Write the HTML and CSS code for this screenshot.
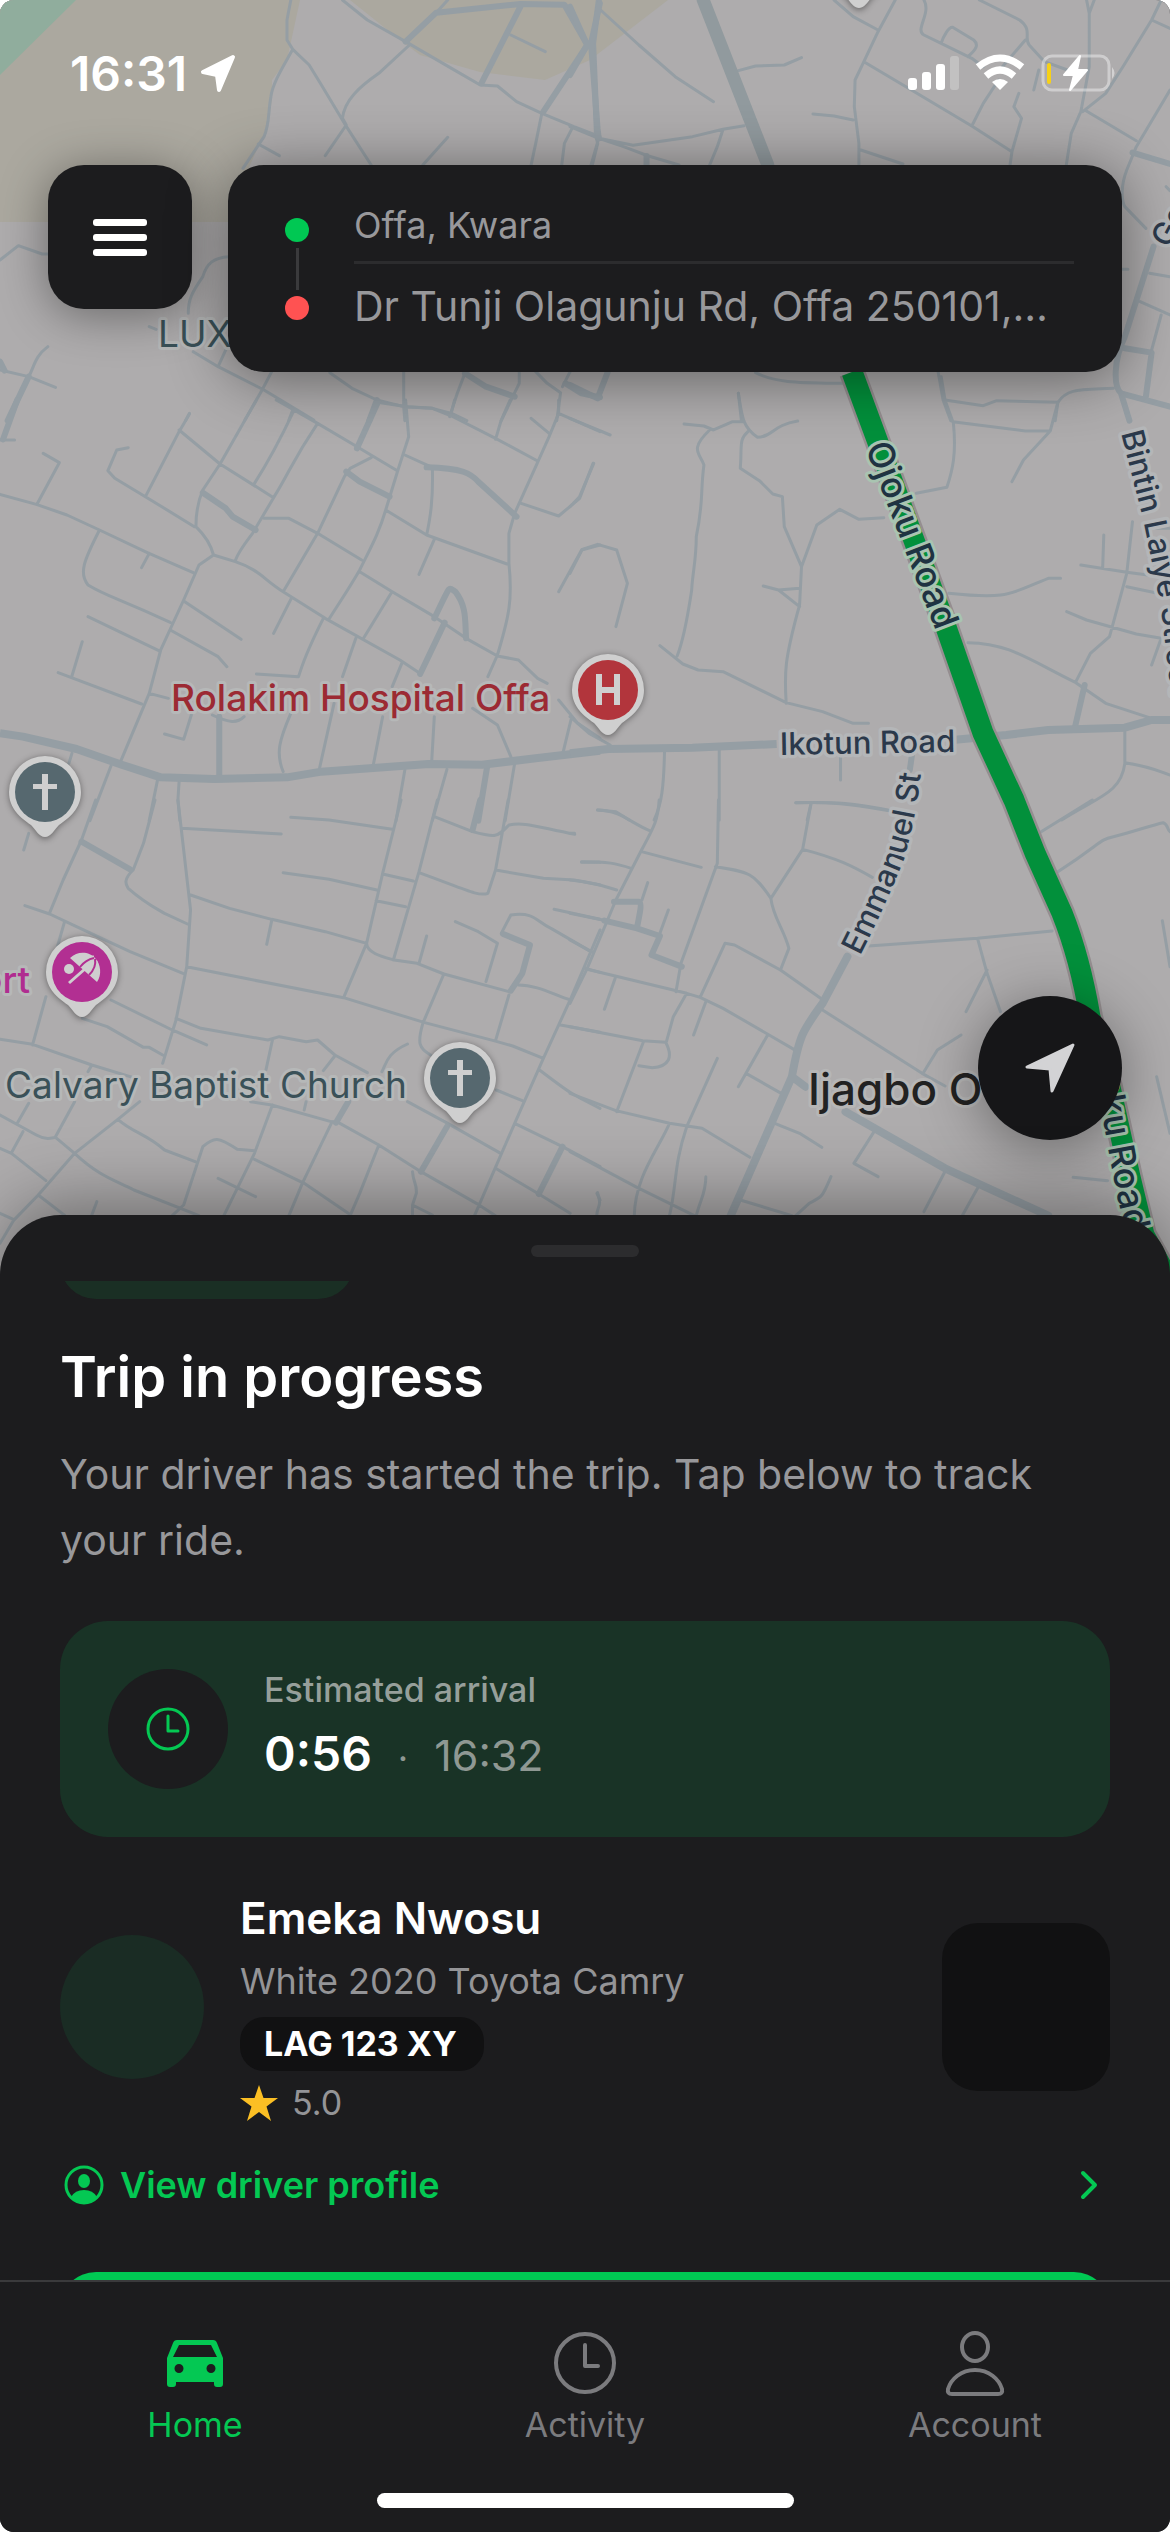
FILE: index.html
```html
<!DOCTYPE html>
<html lang="en">
<head>
<meta charset="utf-8">
<meta name="viewport" content="width=device-width, initial-scale=1">
<title>Trip in progress</title>
<link rel="stylesheet" href="styles.css">
</head>
<body>
<div class="phone">
  <main class="stage">
    <svg class="map" viewBox="0 0 1170 1275" preserveAspectRatio="xMidYMin slice" role="img" aria-label="Map of Offa">
      <defs>
        <path id="ojoku-north" d="M865 447L937 634"/>
        <path id="ojoku-south" d="M1064 1008L1096 1080L1108 1148L1118 1200L1126 1233"/>
        <path id="emmanuel" d="M860 956Q884 909 903 862Q916 820 922 765"/>
        <path id="bintin" d="M1121 433L1144 523L1161 607L1174 720"/>
        <g id="pin">
          <path class="pin-shadow" d="M0 47C-6 47-9 40-14 34C-24 27-36 18-36 1A36 36 0 1 1 36 1C36 18 24 27 14 34C9 40 6 47 0 47Z"/>
          <path class="pin-body" d="M0 45C-6 45-9 38-14 33C-24 26-36 17-36 0A36 36 0 1 1 36 0C36 17 24 26 14 33C9 38 6 45 0 45Z"/>
        </g>
      </defs>
      <rect class="ground" width="1170" height="1275"/>
      <path class="zone" d="M0 0H300L287 60L272 80V100L268 125L250 165L230 222H0Z"/>
      <path class="zone" d="M350 0L395 36L420 55L480 72L545 80L590 60L668 0Z"/>
      <path class="park" d="M0 0H76L0 75Z"/>

      <g class="roads" transform="translate(0 0) scale(.38265 .33333)">
        <path d="M760 0L750 60V120L765 148L808 195L840 255L900 370L970 495M765 148C740 200 712 250 708 290C700 340 705 370 690 410L635 505M675 432L730 467M895 0L960 60L1060 125L1180 205L1255 255L1300 258L1350 305L1416 340L1500 380L1568 410M1070 135L990 220C940 260 900 300 895 355L905 375L850 467M1170 412L1105 495M1335 105L1425 155M1416 340L1400 430L1388 495M1495 385L1475 430L1468 495M1555 400L1562 430L1548 495M1170 0L1140 38"/>
        <path d="M0 780L48 737L110 762H130M598 770C560 772 540 790 530 830C500 880 492 900 492 940M390 980L408 988M505 1055L570 1100L690 1170L820 1260M590 1050L570 1100M710 1115L685 1170L640 1260M765 1230L755 1260M862 1118L920 1165L985 1200L1055 1220L1130 1225L1180 1240L1220 1262M1055 1115V1220L1058 1262M1215 1120L1195 1180L1175 1250M1357 1115V1150L1340 1190L1310 1262M1400 1115L1430 1150L1465 1178L1455 1262M1490 1115L1470 1160M0 1110L75 1130L145 1162M125 1040C90 1070 90 1100 75 1130M495 1240L485 1262"/>
        <path class="wide" d="M1060 125L1140 38L1360 12L1475 14L1535 135L1420 335M1360 20L1258 250M1565 0L1550 130L1560 400"/>
        <path class="wide" d="M20 1262L75 1130M0 1085L12 1112M985 1200L965 1262M1215 1120L1270 1160L1345 1190M1478 1150L1520 1180L1568 1192"/>
      </g>

      <g class="roads" transform="translate(570 0) scale(.38265 .33333)">
        <path d="M80 30L180 135L275 230L375 305M440 212L485 198L560 195L605 173M635 342L690 348L740 360M75 415L165 436L320 410L400 388L455 377M400 388L385 440L365 495M75 415L140 440L205 468L285 495M0 380L75 415L55 495M690 0L740 50L805 90M850 0L805 95L768 185L745 240L743 320L755 430V495M768 185L900 275L1050 378L1155 455M760 450L870 492M925 0C945 40 900 90 925 105L970 130L1050 175L1080 200M970 130C975 110 990 80 1000 82L1055 120C1070 135 1060 150 1040 170M1070 0L1175 60C1210 90 1185 115 1200 135L1240 185L1300 210M1190 120L1130 200M1120 240L1080 310L1050 378M1173 280L1160 320L1180 355L1155 455L1150 495M1350 0L1357 40V200L1335 335L1310 400L1297 495M1370 0L1357 40M1225 210L1212 270M1545 0L1520 60L1445 200L1400 280L1340 335M1520 60L1568 85M1345 330L1480 422M1568 270L1480 440L1455 510C1435 570 1445 610 1450 620L1505 685M1515 820L1568 830M1490 905L1568 945M1545 945L1520 1050M1558 560L1568 572M1440 808H1458M485 1118C540 1150 600 1148 720 1150M440 1180L448 1262M962 1115L975 1200L995 1262M980 1200L1080 1217L1115 1202L1275 1207C1300 1165 1330 1170 1420 1165M1275 1207L1268 1262"/>
        <path class="wide" d="M0 20L45 135L0 225M78 10L55 130L72 385L75 415M1470 458L1568 492M1525 740L1450 1010C1420 1080 1420 1160 1440 1180L1568 1220M1450 1045L1520 1058L1505 1190M1440 1180L1462 1262M0 1155L72 1195L98 1118M200 468V495"/>
        <path class="main" d="M348 0L517 495"/>
      </g>

      <g class="roads" transform="translate(0 400) scale(.38265 .33333)">
        <path d="M0 120H38M113 160L155 188L98 310M0 283L95 313L175 345L260 390L385 458L505 518M335 143L305 150L282 212L300 235L380 290L508 380M495 42L468 95L380 290M468 90L575 192L715 293M670 0L575 192L530 270C515 310 512 340 512 380C530 400 550 430 558 465L520 495L480 600L420 750L390 880L315 1085M768 32C740 100 710 170 665 250M830 70C760 190 760 210 715 293L660 400C640 430 620 460 615 483M722 0L830 70L930 138L1035 210M970 173L915 205L900 230L830 400L740 575M558 465L615 485C680 510 690 540 740 575L850 655L1045 780L1097 820M690 355H755L830 400L945 480M1060 0L1068 110L1040 210L1008 330C990 400 970 440 940 510C910 570 880 620 860 657M1008 330L1115 405L1325 492M1130 205C1132 300 1125 350 1115 405M1135 418L1095 523M1058 165L1125 200M995 8L1065 20L1130 25L1180 48L1295 115L1405 183M1188 0L1178 45M1333 0L1310 60L1295 118M1460 0V40L1435 110L1400 200L1345 340L1330 400V490C1340 600 1330 650 1300 765L1275 830M1460 40L1568 95M1388 55L1435 100M1550 190L1515 295L1460 348L1362 310M1460 575L1520 450L1568 435M940 515L1025 575L1135 650L1218 715L1300 768L1355 780L1405 835L1430 850M1022 580L950 715M390 460L370 503M260 390C220 480 205 520 230 555C280 590 300 590 445 667M480 603L630 718M230 650L415 752M445 690L570 770L593 800M215 725L188 828M152 818L370 912M390 880L440 895M760 598L715 700M845 655C790 780 790 800 780 830L670 822M930 715L895 830M1050 790L1025 860M500 945L480 1018L430 1002M555 945C600 970 620 970 638 950M760 940C730 1020 720 1060 740 1115M873 910L835 1105M1000 950L975 1098M1135 950L1128 1088M1235 925L1300 975L1335 1070M1460 900L1510 970L1568 1015M1492 960L1472 1055M188 1060L180 1090M290 1098L235 1262M412 1138L390 1262M468 1145L465 1200L470 1262M1058 1110L1035 1262M1168 1108L1130 1262M1345 1090L1320 1262"/>
        <path class="wide" d="M45 0L8 118M530 278L590 325L608 350L668 390M988 5L933 145M905 215L940 245L1018 290M1115 202C1210 205 1230 220 1250 245L1350 350M1135 655C1180 550 1170 560 1190 575C1220 620 1215 660 1218 715M1162 668L1098 822M573 950V1130M1273 1100L1250 1262"/>
        <path class="arterial" d="M0 1000L60 1010L200 1047L320 1095L420 1132L560 1137L750 1132L840 1115L1120 1092L1260 1094L1400 1075L1568 1052"/>
      </g>

      <g class="roads" transform="translate(570 360) scale(.38265 .33333)">
        <path d="M0 175L105 225M62 310L25 410L0 440M440 100C450 170 450 200 490 232C530 230 530 195 595 183M298 192L350 198L375 210L425 185H455M365 210C310 270 340 280 350 315C340 400 350 420 330 530C330 600 320 640 318 690C310 750 300 830 280 888M465 215C440 240 450 260 445 325L495 362L530 402L555 410L560 500L605 620L600 735C560 900 560 940 565 1030M605 620L645 495L705 448L755 478L820 473M505 678L545 690L600 685M545 690L600 740M235 857L295 912L335 930L400 935L565 1028L660 1055L740 1090H780M0 640L32 568L72 553L122 570L150 670L120 800M970 50L980 120L1002 190C1010 280 1000 330 985 382L905 400M1000 185L1190 213H1255L1275 127M1255 213L1185 300L1155 365M1470 485L1455 640L1410 830L1360 880L1322 965M1395 525L1392 625M1335 615L1455 637L1530 648M1455 680L1530 698M1298 755L1350 780L1480 822L1545 835L1520 915M990 700C1150 720 1150 700 1250 655H1282M1040 848C1150 850 1200 900 1322 968L1400 1030L1520 1075M0 1070L50 1120L105 1155M247 1175C245 1280 240 1330 220 1380M390 1170V1380M707 1190V1260M590 1328C700 1325 740 1330 840 1352M630 1330L620 1380M72 1350L120 1355L155 1380M1450 1115V1210C1440 1300 1380 1310 1285 1380M1450 1208C1520 1220 1540 1235 1568 1245M1530 505H1568"/>
        <path class="wide" d="M1345 975L1320 1100M895 1175L888 1230"/>
        <path class="arterial" d="M0 1180L100 1167L320 1163L540 1152M1000 1140L1140 1125L1250 1110L1450 1103L1520 1080H1568"/>
      </g>

      <g class="roads" transform="translate(0 800) scale(.38265 .33333)">
        <path d="M75 100L62 150M250 0L213 120L165 240L130 338M65 317L130 342L200 380L340 455L478 520M168 368L150 440M405 0L375 130L348 210C320 240 330 255 335 265C380 310 400 320 430 340L490 372M465 0L498 330L488 500L460 660L425 790M475 85L735 102M760 52L860 60L1025 88M740 218L860 238L985 270M1048 0L1000 220L958 430C960 460 1000 470 1030 480L1090 490L1160 522L1330 575M1143 0L1095 215L1028 480M1135 50L1235 95C1300 115 1300 110 1330 75C1370 65 1400 80 1502 103M1328 0L1295 210L1275 280C1250 290 1220 270 1095 218M1000 222L1080 243M983 302L1060 320M498 285L600 325L710 358L850 395L958 430L898 593M710 362L697 433M488 500L640 535L898 593L1110 668L1290 722L1340 738L1420 775M1115 408L1095 490M1160 522L1105 670C1090 730 1095 745 1125 765M1330 585L1295 722M1190 365L1250 395L1300 430L1270 545M1310 400L1335 345C1400 335 1400 365 1440 385L1545 455M1295 210L1420 235L1500 240L1568 255M1520 187H1568M1448 328L1568 358M1568 390L1490 600L1420 775L1345 970L1240 1247M1530 505L1568 517M1355 555C1400 555 1440 580 1490 600M1465 675L1568 697M120 590L85 735M0 718L85 733L240 795L355 835M290 600L450 690L540 735M215 655L280 680L375 742H390L425 765M240 795L230 815M460 655L525 685L700 720L730 710L800 725L830 720L875 765L960 818M712 720L695 810M875 768L845 812M1065 732C1010 760 1010 790 998 815M1410 810C1490 880 1490 880 1568 925M1297 870L1365 902M655 905L710 915L865 965L880 965L990 1035L1100 1115M800 905L795 930M712 915L665 1060L585 1247M868 965L790 1150L755 1247M990 1035L940 1180L915 1247M665 1078L795 1150L910 1240M570 1135L668 1190M1065 905L1170 970L1305 1058M1345 970L1470 1040L1568 1100M1295 1105L1405 1180L1490 1240M1100 1115L1245 1210L1295 1247M1078 1115C1080 1150 1090 1150 1088 1180L1078 1215V1247M1078 1215L1130 1245M0 945L95 1005C120 1020 130 1015 145 1012L195 1060C260 1130 300 1140 350 1170L520 1247M75 910L45 970M60 995L30 1058M195 905L145 1010M365 905L308 958L195 1060L100 1185L35 1262L0 1330M308 958C350 1000 380 1000 430 1050L510 1085M0 1045L30 1060L120 1142M100 1185L170 1247M0 1240L35 1258M253 1205L240 1245M665 1052L620 1048C570 1010 560 1010 530 1040L480 1215L450 1247M1560 1180L1568 1200"/>
        <path class="wide" d="M213 125L340 208M1255 0L1235 90M1315 402L1385 435L1365 520L1335 572M910 905L878 968M1168 980L1100 1115M1470 1040L1408 1182"/>
      </g>

      <g class="roads" transform="translate(570 800) scale(.38265 .33333)">
        <path d="M233 0C230 60 220 80 187 150L120 300L45 505L0 610M72 30C130 30 160 70 208 92M0 100H12M30 185C100 185 120 190 160 205M187 155L343 202M388 0L385 190L350 300L290 490L277 575M380 200C470 215 480 220 525 295C530 350 560 390 572 445L550 510M0 240C50 245 80 255 122 270M203 248L188 300M257 330L235 400M0 340L95 362M0 420L55 455M45 508L305 580L340 592L400 625L585 748M118 535L90 628M305 580L270 650L252 725M0 680L190 722L250 727C270 770 260 800 215 803L180 797M192 725L122 935M355 605L323 705M515 708L440 860M385 775L305 980C270 1100 280 1150 260 1247M460 820L552 880M340 592L405 430L430 435L550 510L655 595M630 10L608 148L525 295M590 8C700 5 740 15 835 32M608 148C700 175 740 200 790 232M780 438L1065 415L1260 393M1065 415L1090 520L1125 635M1090 510L1035 635M660 630L920 820L980 858M1022 705L960 750L925 815M0 880L120 932L260 970L345 985L470 1072M260 970C230 1050 170 1130 168 1247M0 1055L175 1162L325 1247M72 1178C85 1220 70 1220 70 1247M355 1130C355 1180 340 1200 330 1247M535 970L600 1000L658 1042M445 1200L580 1247M682 1130C660 1190 660 1190 625 1210L590 1247M800 985L742 1090L805 1130M982 1110L925 1235M1065 1165L1025 1247M1315 1132L1405 1142M1225 100L1365 0M1275 215C1390 130 1380 120 1420 110C1460 100 1520 75 1550 68C1565 75 1560 90 1568 95M1548 362L1568 500M1533 830L1568 1000"/>
        <path class="wide" d="M115 305H180C190 310 180 350 175 385M90 362L175 385L235 408L213 465L292 500"/>
        <path class="mid" d="M725 470L660 610C610 690 600 700 580 830L420 1247M580 830L615 860M720 935L980 1105L1250 1247"/>
      </g>

      <path class="route-edge" d="M852 372L876 437L947 630L983 733L1014 800L1035 853L1062 913Q1080 958 1090 1017L1110 1087L1130 1177L1144 1235L1180 1300"/>
      <path class="route" d="M852 372L876 437L947 630L983 733L1014 800L1035 853L1062 913Q1080 958 1090 1017L1110 1087L1130 1177L1144 1235L1180 1300"/>

      <g class="street">
        <text class="on-route"><textPath href="#ojoku-north">Ojoku Road</textPath></text>
        <text class="on-route" text-anchor="end"><textPath href="#ojoku-south" startOffset="100%">Ojoku Road</textPath></text>
        <text><textPath href="#emmanuel">Emmanuel St</textPath></text>
        <text><textPath href="#bintin">Bintin Laiye Street</textPath></text>
        <text transform="translate(780 755) rotate(-1)">Ikotun Road</text>
        <text transform="translate(1169 249) rotate(-62)">Ge</text>
      </g>
      <text class="place slate" x="158" y="347">LUX</text>
      <text class="place red" x="171" y="711">Rolakim Hospital Offa</text>
      <text class="place slate" x="407" y="1098" text-anchor="end">Calvary Baptist Church</text>
      <text class="place pink" x="30" y="993" text-anchor="end">ort</text>
      <text class="town" x="808" y="1105">Ijagbo O</text>

      <g transform="translate(859 -37)"><use href="#pin"/></g>
      <g transform="translate(608 690)"><use href="#pin"/><circle class="fill-red" r="30"/><path class="glyph" d="M-12-16H-6V-3H6V-16H12V15H6V3H-6V15H-12Z"/></g>
      <g transform="translate(45 792)"><use href="#pin"/><circle class="fill-slate" r="30"/><path class="glyph" d="M-3-18H3V-8H12V-3H3V18H-3V-3H-12V-8H-3Z"/></g>
      <g transform="translate(460 1078)"><use href="#pin"/><circle class="fill-slate" r="30"/><path class="glyph" d="M-3-18H3V-8H12V-3H3V18H-3V-3H-12V-8H-3Z"/></g>
      <g transform="translate(82 972)"><use href="#pin"/><circle class="fill-pink" r="30"/><circle class="glyph" cx="-13" cy="-3" r="5"/><path class="glyph" d="M-12-14C-4-22 8-20 13-14C19-8 20 3 15 10Z"/><path class="umbrella" d="M-13 11L4-4M-4-8C2-14 7-15 12-15M10 5C14 0 15-6 14-11"/><path class="umbrella-gap" d="M-2-5C2-10 7-13 12-14M7 3C12-2 14-8 13-13"/></g>
    </svg>

    <header class="status">
      <div class="clock">16:31
        <svg width="38" height="40" viewBox="0 0 38 40" aria-hidden="true"><path d="M34 3L4 18L18 21L20 36Z" fill="#fff" stroke="#fff" stroke-width="4" stroke-linejoin="round"/></svg>
      </div>
      <svg class="indicators" width="210" height="40" viewBox="0 0 210 40" aria-hidden="true">
        <g fill="#fff">
          <rect x="2" y="24" width="9" height="12" rx="3"/><rect x="16" y="18" width="9" height="18" rx="3"/><rect x="30" y="10" width="9" height="26" rx="3"/>
          <rect x="44" y="2" width="9" height="34" rx="3" opacity=".25"/>
          <path d="M94 36L86 28Q94 22 102 28Z"/>
        </g>
        <path d="M72 10Q94-8 116 10" transform="translate(0 3)" fill="none" stroke="#fff" stroke-width="7"/>
        <path d="M80 21Q94 9 108 21" transform="translate(0 1)" fill="none" stroke="#fff" stroke-width="7"/>
        <rect x="137" y="2" width="66" height="34" rx="9" fill="none" stroke="#fff" stroke-opacity=".4" stroke-width="3"/>
        <path d="M206 13Q211 19 206 25Z" fill="#fff" fill-opacity=".45"/>
        <rect x="141" y="9" width="4" height="21" rx="2" fill="#f7d117"/>
        <path d="M174 2L158 21H168L164 36L181 16H171Z" fill="#fff" stroke="#fff" stroke-width="2" stroke-linejoin="round"/>
      </svg>
    </header>

    <div class="topbar">
      <button class="menu" type="button" aria-label="Menu"><span></span><span></span><span></span></button>
      <section class="trip" aria-label="Route">
        <div class="track"><i class="dot from"></i><i class="link"></i><i class="dot to"></i></div>
        <div class="stops">
          <p class="origin">Offa, Kwara</p>
          <hr>
          <p class="destination">Dr Tunji Olagunju Rd, Offa 250101,…</p>
        </div>
      </section>
    </div>

    <button class="locate" type="button" aria-label="My location">
      <svg width="54" height="54" viewBox="0 0 54 54" aria-hidden="true"><path d="M50 4L4 26L27 28L29 50Z" fill="#d3d3d5" stroke="#d3d3d5" stroke-width="3" stroke-linejoin="round"/></svg>
    </button>
  </main>

  <section class="sheet">
    <div class="handle"></div>
    <div class="scroller">
      <div class="badge"></div>
      <h1>Trip in progress</h1>
      <p class="lead">Your driver has started the trip. Tap below to track your ride.</p>

      <div class="eta">
        <div class="eta-icon">
          <svg width="46" height="46" viewBox="0 0 46 46" aria-hidden="true"><circle cx="23" cy="23" r="20"/><path d="M23 10V25H33"/></svg>
        </div>
        <div class="eta-text">
          <p class="eta-label">Estimated arrival</p>
          <p class="eta-value"><strong>0:56</strong><span class="sep">·</span><span>16:32</span></p>
        </div>
      </div>

      <div class="driver">
        <div class="avatar"></div>
        <div class="driver-info">
          <h2>Emeka Nwosu</h2>
          <p class="car">White 2020 Toyota Camry</p>
          <p class="plate">LAG 123 XY</p>
          <p class="rating"><svg width="38" height="36" viewBox="0 0 38 36" aria-hidden="true"><path fill="#fbbf24" d="M19 0L23.500 13H38L26.500 21.500L31 36L19 27L7 36L11.500 21.500L0 13H14.500Z"/></svg>5.0</p>
        </div>
        <div class="vehicle"></div>
      </div>

      <a class="profile" href="#profile">
        <svg width="42" height="42" viewBox="0 0 42 42" aria-hidden="true"><circle cx="21" cy="21" r="18" fill="none" stroke="#04c853" stroke-width="3"/><ellipse cx="21" cy="17" rx="6" ry="7" fill="#04c853"/><path fill="#04c853" d="M8 33Q12 26 21 26T34 33Q28 40 21 40T8 33Z"/></svg>
        <span>View driver profile</span>
        <svg class="chevron" width="42" height="42" viewBox="0 0 42 42" aria-hidden="true"><path d="M18 9L30 21L18 33" fill="none" stroke="#04c853" stroke-width="4" stroke-linecap="round" stroke-linejoin="round"/></svg>
      </a>
      <button class="track-ride" type="button" aria-label="Track ride"></button>
    </div>
  </section>

  <nav class="tabs">
    <a class="active" href="#home">
      <svg width="72" height="72" viewBox="0 0 72 72" aria-hidden="true"><path fill="#04c853" fill-rule="evenodd" d="M18 13H54Q57 13 58 16L64 31V57Q64 60 61 60H58Q55 60 55 57V55H17V57Q17 60 14 60H11Q8 60 8 57V31L14 16Q15 13 18 13ZM20 18L14 30H58L52 18ZM20 37A4.500 4.500 0 1 0 20 46A4.500 4.500 0 1 0 20 37ZM52 37A4.500 4.500 0 1 0 52 46A4.500 4.500 0 1 0 52 37Z"/></svg>
      <span>Home</span>
    </a>
    <a href="#activity">
      <svg width="72" height="72" viewBox="0 0 72 72" aria-hidden="true"><circle cx="36" cy="36" r="29"/><path d="M36 18V39H49"/></svg>
      <span>Activity</span>
    </a>
    <a href="#account">
      <svg width="72" height="72" viewBox="0 0 72 72" aria-hidden="true"><ellipse cx="36" cy="20" rx="13" ry="14"/><path d="M36 43C50 43 60 52 63 62Q64 67 59 67H13Q8 67 9 62C12 52 22 43 36 43Z"/></svg>
      <span>Account</span>
    </a>
    <div class="home-bar"></div>
  </nav>
</div>
</body>
</html>
```
FILE: styles.css
```css
* { box-sizing: border-box; }
body { margin: 0; background: #fff; font-family: Inter, "Liberation Sans", sans-serif; }
h1, h2, p, hr { margin: 0; }
button { border: 0; padding: 0; font: inherit; }
a { text-decoration: none; }
svg { display: block; flex: none; }

.phone { min-height: 100vh; display: flex; flex-direction: column; overflow: hidden; border-radius: 14px; background: #1c1c1e; }

/* Map area */
.stage { position: relative; flex: 1; display: flex; flex-direction: column; }
.map { position: absolute; left: 0; top: 0; width: 100%; height: calc(100% + 60px); }
.status, .topbar, .locate { position: relative; }

.ground { fill: #aeacad; }
.zone { fill: #aba89f; }
.park { fill: #90ad9d; }
.roads path { fill: none; stroke: #959ea4; stroke-width: 3px; stroke-linejoin: round; stroke-linecap: round; vector-effect: non-scaling-stroke; }
.roads .wide { stroke-width: 6px; }
.roads .mid { stroke-width: 8px; }
.roads .arterial { stroke-width: 8px; stroke-linecap: butt; }
.roads .main { stroke-width: 13px; stroke: #919a9e; }
.route-edge, .route { fill: none; stroke-linejoin: round; }
.route-edge { stroke: #958e90; stroke-width: 26px; }
.route { stroke: #02903b; stroke-width: 21px; }

.street text { font-size: 31px; font-weight: 500; fill: #2b394b; stroke: #b4b6b8; stroke-width: 7px; stroke-linejoin: round; paint-order: stroke; }
.street .on-route { font-size: 36px; fill: #1f3342; stroke: #a9c4b1; stroke-width: 6px; }
.place { font-size: 37px; stroke: #b6b8b8; stroke-width: 6px; stroke-linejoin: round; paint-order: stroke; }
.slate { fill: #3a5158; }
.red { fill: #9c2a33; font-weight: 500; }
.pink { fill: #b02d90; font-weight: 500; }
.town { font-size: 44px; font-weight: 500; fill: #222; stroke: #b6b6b6; stroke-width: 6px; stroke-linejoin: round; paint-order: stroke; }

.pin-shadow { fill: rgba(0, 0, 0, .4); filter: blur(3px); }
.pin-body, .glyph { fill: #cfcfcf; }
.fill-red { fill: #b2353c; }
.fill-slate { fill: #56686f; }
.fill-pink { fill: #b22f92; }
.umbrella { fill: none; stroke: #cfcfcf; stroke-width: 3px; }
.umbrella-gap { fill: none; stroke: #b22f92; stroke-width: 2px; }

/* Status bar */
.status { display: flex; justify-content: space-between; align-items: center; height: 165px; padding: 0 54px 17px 70px; }
.clock { display: flex; align-items: center; gap: 12px; color: #fff; font-size: 48px; font-weight: 600; line-height: 56px; }

/* Route card */
.topbar { display: flex; align-items: flex-start; gap: 36px; padding: 0 48px; }
.menu { width: 144px; height: 144px; flex: none; display: flex; flex-direction: column; align-items: center; justify-content: center; gap: 8px; border-radius: 36px; background: #1c1c1e; box-shadow: 0 6px 48px rgba(0, 0, 0, .4); }
.menu span { width: 54px; height: 7px; border-radius: 3px; background: #fff; }
.trip { flex: 1; min-width: 0; display: flex; gap: 45px; padding: 42px 48px 42px 57px; border-radius: 36px; background: #1c1c1e; box-shadow: 0 6px 60px rgba(0, 0, 0, .45); }
.track { display: flex; flex-direction: column; align-items: center; justify-content: center; gap: 6px; }
.dot { width: 24px; height: 24px; border-radius: 50%; }
.from { background: #00c853; }
.to { background: #ff5252; }
.link { width: 3px; height: 42px; background: #3a3a3c; }
.stops { flex: 1; min-width: 0; color: #98989b; }
.origin, .destination { overflow: hidden; white-space: nowrap; }
.origin { font-size: 36px; line-height: 36px; padding: 0 0 18px; }
.stops hr { height: 3px; border: 0; background: #2c2c2e; }
.destination { font-size: 41px; line-height: 48px; padding-top: 18px; }

.locate { width: 144px; height: 144px; margin: auto 48px 75px auto; display: flex; align-items: center; justify-content: center; border-radius: 50%; background: #161618; box-shadow: 0 9px 60px rgba(0, 0, 0, .4); }

/* Bottom sheet */
.sheet { position: relative; padding-top: 30px; border-radius: 60px 60px 0 0; background: #1c1c1e; box-shadow: 0 -9px 72px rgba(0, 0, 0, .4); }
.handle { width: 108px; height: 12px; margin: 0 auto 24px; border-radius: 6px; background: #2c2c2e; }
.scroller { overflow: hidden; padding: 0 60px; }
.badge { width: 294px; height: 72px; margin-top: -54px; border-radius: 36px; background: #1a2f24; }
h1 { margin-top: 42px; color: #fff; font-size: 56px; font-weight: 600; line-height: 72px; }
.lead { margin-top: 28px; color: #98989b; font-size: 41px; line-height: 66px; }

.eta { display: flex; align-items: center; gap: 36px; margin-top: 48px; padding: 48px; border-radius: 48px; background: #193326; }
.eta-icon { width: 120px; height: 120px; display: flex; align-items: center; justify-content: center; border-radius: 50%; background: #1c1c1e; }
.eta-icon svg { fill: none; stroke: #04c853; stroke-width: 3px; stroke-linecap: round; stroke-linejoin: round; }
.eta-text { display: flex; flex-direction: column; gap: 14px; }
.eta-label { color: #969f9a; font-size: 34px; font-weight: 500; line-height: 40px; }
.eta-value { display: flex; align-items: baseline; gap: 26px; color: #8f9893; font-size: 43px; line-height: 60px; }
.eta-value strong { color: #fff; font-size: 48px; font-weight: 600; }
.sep { font-size: 36px; }

.driver { display: flex; align-items: center; gap: 36px; margin-top: 54px; }
.avatar { width: 144px; height: 144px; border-radius: 50%; background: #1a2c24; }
.driver-info { flex: 1; display: flex; flex-direction: column; align-items: flex-start; gap: 12px; }
.driver-info h2 { color: #fff; font-size: 44px; font-weight: 600; line-height: 54px; }
.car { color: #949497; font-size: 36px; line-height: 48px; }
.plate { padding: 0 27px 0 24px; border-radius: 24px; background: #111112; color: #fff; font-size: 34px; font-weight: 700; line-height: 54px; }
.rating { display: flex; align-items: center; gap: 14px; color: #949497; font-size: 34px; line-height: 40px; }
.vehicle { width: 168px; height: 168px; border-radius: 36px; background: #111112; }

.profile { display: flex; align-items: center; gap: 15px; margin-top: 35px; padding: 3px; color: #04c853; font-size: 36px; font-weight: 600; line-height: 48px; }
.chevron { margin-left: auto; }
.track-ride { display: block; width: 100%; height: 168px; margin: 60px 0 -160px; border-radius: 36px; background: #00c853; }

/* Tab bar */
.tabs { position: relative; display: grid; grid-template-columns: repeat(3, 1fr); border-top: 2px solid #3a3a3c; background: #1c1c1e; padding-top: 45px; }
.tabs a { display: flex; flex-direction: column; align-items: center; gap: 6px; color: #7b7b7e; font-size: 34px; line-height: 40px; }
.tabs a svg { fill: none; stroke: #7b7b7e; stroke-width: 4px; stroke-linecap: round; stroke-linejoin: round; }
.tabs .active { color: #04c853; }
.tabs .active svg { stroke: none; }
.home-bar { grid-column: 1 / -1; justify-self: center; width: 417px; max-width: 50%; height: 15px; margin: 48px 0 24px; border-radius: 8px; background: #fff; }
```
